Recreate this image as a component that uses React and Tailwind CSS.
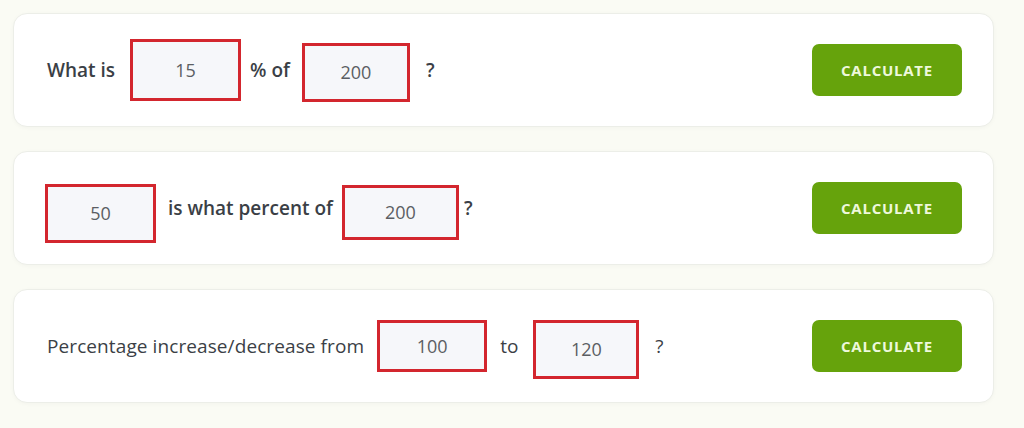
import React from "react";

const font = { fontFamily: '"Open Sans", "Noto Sans", sans-serif' };

function Box({ value, className }) {
  return (
    <div
      className={
        "flex items-center justify-center border-[3px] border-[#d3262e] bg-[#f6f7fa] text-[18px] text-[#5b5e63] " +
        className
      }
    >
      {value}
    </div>
  );
}

function Button() {
  return (
    <button className="ml-auto flex h-[52px] w-[150px] shrink-0 items-center justify-center rounded-[7px] bg-[#66a30c] text-[15px] font-bold tracking-[0.05em] text-[#eef8dc]">
      CALCULATE
    </button>
  );
}

function Card({ children }) {
  return (
    <div className="flex h-[114px] items-center rounded-[14px] border border-[#eceee8] bg-white pl-[33px] pr-[31px] shadow-[0_1px_4px_rgba(0,0,0,0.03)]">
      {children}
    </div>
  );
}

export default function App() {
  return (
    <div
      className="flex h-[428px] w-[1024px] flex-col gap-[24px] bg-[#fafbf4] pl-[13px] pr-[30px] pt-[13px] text-[#3b3f46]"
      style={font}
    >
      <Card>
        <span className="text-[19px] font-semibold">What is</span>
        <Box value="15" className="ml-[15px] h-[62px] w-[111px]" />
        <span className="ml-[9px] text-[19px] font-semibold">% of</span>
        <Box value="200" className="ml-[12px] mt-[5px] h-[59px] w-[108px]" />
        <span className="ml-[16px] text-[19px] font-semibold">?</span>
        <Button />
      </Card>
      <Card>
        <Box value="50" className="-ml-[2px] mt-[11px] h-[59px] w-[111px]" />
        <span className="ml-[12px] text-[19px] font-semibold">is what percent of</span>
        <Box value="200" className="ml-[9px] mt-[9px] h-[55px] w-[117px]" />
        <span className="ml-[5px] text-[19px] font-semibold">?</span>
        <Button />
      </Card>
      <Card>
        <span className="text-[19px] tracking-[0.005em]">Percentage increase/decrease from</span>
        <Box value="100" className="ml-[13px] h-[52px] w-[110px]" />
        <span className="ml-[13px] text-[19px]">to</span>
        <Box value="120" className="ml-[15px] mt-[7px] h-[59px] w-[106px]" />
        <span className="ml-[16px] text-[19px]">?</span>
        <Button />
      </Card>
    </div>
  );
}
